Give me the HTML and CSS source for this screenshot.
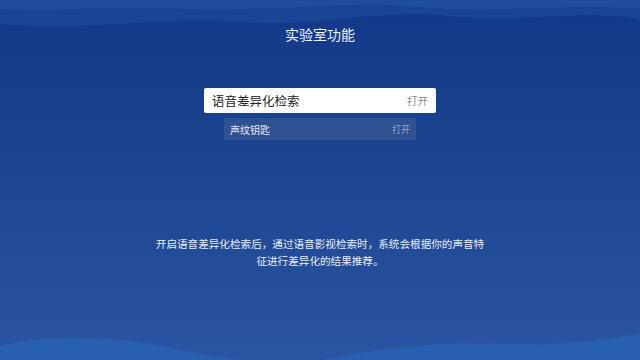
FILE: index.html
```html
<!DOCTYPE html>
<html lang="zh-CN">
<head>
<meta charset="UTF-8">
<meta name="viewport" content="width=device-width, initial-scale=1.0">
<title>实验室功能</title>
<link rel="stylesheet" href="styles.css">
</head>
<body>
<div class="screen">
  <!-- decorative waves -->
  <svg class="waves" width="640" height="360" viewBox="0 0 640 360">
    <path d="M0 0 H640 V20 C590 8 520 24 450 16 C380 8 320 28 240 22 C160 16 90 32 0 24 Z" fill="#1d4d9c" opacity="0.6"/>
    <path d="M0 0 H640 V9 C560 2 500 15 420 7 C340 0 260 13 180 9 C110 5 50 13 0 9 Z" fill="#2658a8" opacity="0.45"/>
    <path d="M0 360 V346 C40 336 80 336 120 340 C160 344 190 354 240 360 Z" fill="#2a66b8" opacity="0.65"/>
    <path d="M320 360 C380 348 440 342 500 344 C560 346 600 340 640 334 V360 Z" fill="#2a66b8" opacity="0.65"/>
  </svg>

  <div class="title">实验室功能</div>

  <div class="options">
    <div class="option option-active">
      <span class="option-name">语音差异化检索</span>
      <span class="option-state">打开</span>
    </div>
    <div class="option option-sub">
      <span class="option-name">声纹钥匙</span>
      <span class="option-state">打开</span>
    </div>
  </div>

  <p class="desc">开启语音差异化检索后，通过语音影视检索时，系统会根据你的声音特征进行差异化的结果推荐。</p>
</div>
</body>
</html>
```

FILE: styles.css
```css
/* General Styles */
body {
  margin: 0;
  padding: 0;
  font-family: "Noto Sans CJK SC", "Noto Sans", sans-serif;
  background-color: #1c4690;
}
.screen {
  position: relative;
  width: 640px;
  height: 360px;
  overflow: hidden;
  display: flex;
  flex-direction: column;
  align-items: center;
  background: linear-gradient(180deg, #12398a 0%, #1a418c 35%, #234c98 70%, #2a55a2 100%);
  color: #e6edf8;
}
.waves {
  position: absolute;
  left: 0;
  top: 0;
}
.title {
  position: relative;
  margin-top: 24px;
  font-size: 14px;
  line-height: 20px;
  color: #eef2fa;
}
/* Option list */
.options {
  position: relative;
  margin-top: 44px;
  display: flex;
  flex-direction: column;
  align-items: center;
  gap: 5px;
}
.option {
  display: flex;
  justify-content: space-between;
  align-items: center;
  box-sizing: border-box;
}
.option-active {
  width: 232px;
  height: 25px;
  padding: 0 8px;
  background-color: #ffffff;
  border-radius: 2px;
  color: #222;
  font-size: 12.5px;
}
.option-active .option-state {
  color: #8a8a8a;
  font-size: 10.5px;
}
.option-sub {
  width: 192px;
  height: 22px;
  padding: 0 6px;
  background-color: #2f5192;
  color: #e4eaf6;
  font-size: 10px;
}
.option-sub .option-state {
  color: #8fa6cf;
  font-size: 9px;
}
.desc {
  position: relative;
  margin: 95px 0 0;
  width: 334px;
  font-size: 10.6px;
  line-height: 17px;
  text-align: center;
  color: #e8eef8;
}
```
